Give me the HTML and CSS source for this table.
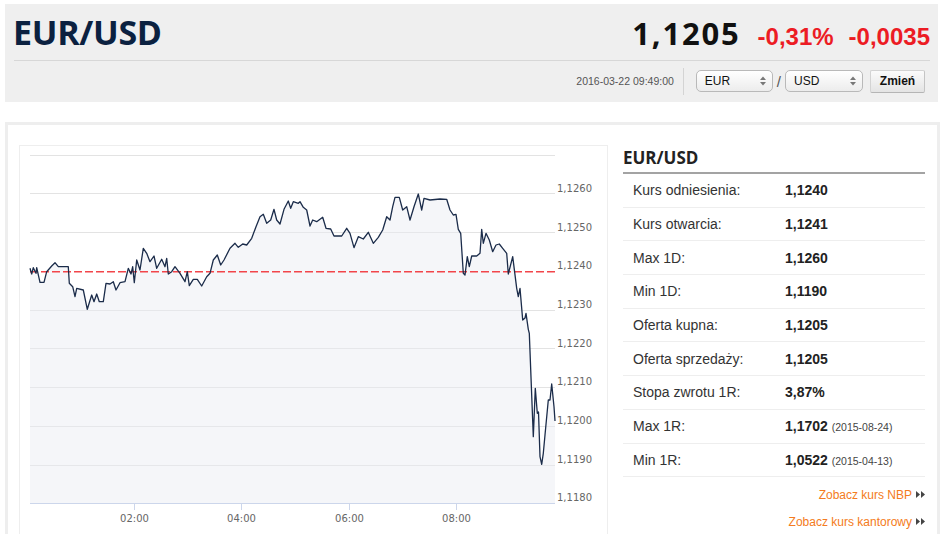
FILE: index.html
```html
<!DOCTYPE html>
<html lang="pl">
<head>
<meta charset="utf-8">
<title>EUR/USD</title>
<link rel="stylesheet" href="styles.css">
</head>
<body>
<header class="header">
  <div class="top-row">
    <h1 class="title">EUR/USD</h1>
    <div class="quote">
      <span class="price">1,1205</span>
      <span class="change">-0,31%</span>
      <span class="change">-0,0035</span>
    </div>
  </div>
  <div class="sub-row">
    <span class="date">2016-03-22 09:49:00</span>
    <span class="vsep"></span>
    <div class="select sel-eur">EUR<svg class="sel-arrows" width="6" height="10" viewBox="0 0 6 10"><polygon points="0,4 3,0.5 6,4" /><polygon points="0,6 3,9.5 6,6" /></svg></div>
    <span class="slash">/</span>
    <div class="select sel-usd">USD<svg class="sel-arrows" width="6" height="10" viewBox="0 0 6 10"><polygon points="0,4 3,0.5 6,4" /><polygon points="0,6 3,9.5 6,6" /></svg></div>
    <button class="btn">Zmień</button>
  </div>
</header>

<main class="main">
  <div class="chart-box">
    <svg class="chart" width="588" height="390" viewBox="20 146 588 390">
      <g class="grid">
        <line x1="30" x2="555" y1="155.5" y2="155.5" />
        <line x1="30" x2="555" y1="193.5" y2="193.5" />
        <line x1="30" x2="555" y1="232.5" y2="232.5" />
        <line x1="30" x2="555" y1="310.5" y2="310.5" />
        <line x1="30" x2="555" y1="348.5" y2="348.5" />
        <line x1="30" x2="555" y1="387.5" y2="387.5" />
        <line x1="30" x2="555" y1="426.5" y2="426.5" />
        <line x1="30" x2="555" y1="465.5" y2="465.5" />
      </g>
      <path class="area" d="M30,268.3 L31.7,274 33.3,267.7 36,273.3 36.7,267.7 40,282.3 44,282.3 46.7,271.7 51.7,266 55,262.7 58.3,266.7 68.3,266.7 69.3,283.3 72.7,286.7 75,296.7 76.7,288.3 83.3,290 87.3,309.3 91.7,295 94,301.7 96.7,294 99.3,301.7 103.3,301.7 106,283.3 110,284 113.3,281.7 116,290 120,282.7 125,281.7 128.3,268.3 131,274 132.7,266.7 134.3,282.7 136.7,260 140,270 143.3,248.3 146.7,253.3 150,261.7 154,256 156.7,268.3 161.7,259.3 165,266.7 166.7,258.3 168.3,274 171.7,271.7 175,266.7 180,273.3 185,281.7 187.3,271.7 189.3,285.7 193.3,279.3 197.3,279.3 201.7,286 206.7,276.7 210,273.3 213.3,260 217.3,255 220.7,265 224,260 230,248.3 235,243.3 238.3,247.3 242.7,244 246.7,245 251.7,238.3 256,226.7 260,216.7 263.3,214.3 266.7,223.3 270.7,220 274,209.3 276.7,220 280,224 284,209.3 288.3,201 290.7,208.3 293.3,201.7 298.3,203.3 300,201.7 303.3,207.3 306.7,210 310,226 312.7,220 316.7,221.7 320,219.3 322.7,217.3 326,228.3 330.7,229 334,236 336.7,236 341.7,236 346.7,228.3 350,233.3 354,247.7 358.3,236.7 363.3,239 368.3,232.3 373.3,243.3 378.3,237.3 382.7,230 386.7,216.7 390,220 392.7,206.7 395,197.3 399.3,197.3 402.7,210 406.7,206.7 410,220 414,206.7 418.3,194 421.7,210 424,198.3 430,200 440,199 446.7,199.3 450,210 453.3,215 456,214.3 458.3,229.3 460.7,233.3 463.3,273.3 465,275 467.3,256.7 469.3,266.7 471.7,256 476.7,256 480,253.3 481.7,229.3 483.3,243.3 486,233.3 489.3,240 492.7,251.7 496,245 499.3,244 502.7,248.3 506.7,253.3 508.3,274 512.7,256.7 516.7,288.3 518.3,296.7 520,288.3 522.7,320 525,318 526,313.3 528.3,329.3 529.3,333.3 533.3,436.7 535.3,388.3 537.3,413.3 538.5,412 540,456.7 541.7,464.3 543.3,453.3 545,435 548.3,400 550,400 551.7,384 554,406.7 555,421 L555,503.5 L30,503.5 Z" />
      <line class="ref-line" x1="30" x2="555" y1="271.75" y2="271.75" />
      <path class="series" d="M30,268.3 L31.7,274 33.3,267.7 36,273.3 36.7,267.7 40,282.3 44,282.3 46.7,271.7 51.7,266 55,262.7 58.3,266.7 68.3,266.7 69.3,283.3 72.7,286.7 75,296.7 76.7,288.3 83.3,290 87.3,309.3 91.7,295 94,301.7 96.7,294 99.3,301.7 103.3,301.7 106,283.3 110,284 113.3,281.7 116,290 120,282.7 125,281.7 128.3,268.3 131,274 132.7,266.7 134.3,282.7 136.7,260 140,270 143.3,248.3 146.7,253.3 150,261.7 154,256 156.7,268.3 161.7,259.3 165,266.7 166.7,258.3 168.3,274 171.7,271.7 175,266.7 180,273.3 185,281.7 187.3,271.7 189.3,285.7 193.3,279.3 197.3,279.3 201.7,286 206.7,276.7 210,273.3 213.3,260 217.3,255 220.7,265 224,260 230,248.3 235,243.3 238.3,247.3 242.7,244 246.7,245 251.7,238.3 256,226.7 260,216.7 263.3,214.3 266.7,223.3 270.7,220 274,209.3 276.7,220 280,224 284,209.3 288.3,201 290.7,208.3 293.3,201.7 298.3,203.3 300,201.7 303.3,207.3 306.7,210 310,226 312.7,220 316.7,221.7 320,219.3 322.7,217.3 326,228.3 330.7,229 334,236 336.7,236 341.7,236 346.7,228.3 350,233.3 354,247.7 358.3,236.7 363.3,239 368.3,232.3 373.3,243.3 378.3,237.3 382.7,230 386.7,216.7 390,220 392.7,206.7 395,197.3 399.3,197.3 402.7,210 406.7,206.7 410,220 414,206.7 418.3,194 421.7,210 424,198.3 430,200 440,199 446.7,199.3 450,210 453.3,215 456,214.3 458.3,229.3 460.7,233.3 463.3,273.3 465,275 467.3,256.7 469.3,266.7 471.7,256 476.7,256 480,253.3 481.7,229.3 483.3,243.3 486,233.3 489.3,240 492.7,251.7 496,245 499.3,244 502.7,248.3 506.7,253.3 508.3,274 512.7,256.7 516.7,288.3 518.3,296.7 520,288.3 522.7,320 525,318 526,313.3 528.3,329.3 529.3,333.3 533.3,436.7 535.3,388.3 537.3,413.3 538.5,412 540,456.7 541.7,464.3 543.3,453.3 545,435 548.3,400 550,400 551.7,384 554,406.7 555,421" />
      <line class="axis" x1="30" x2="555" y1="503.5" y2="503.5" />
      <g class="ticks">
        <line x1="134.5" x2="134.5" y1="504" y2="510" />
        <line x1="241.5" x2="241.5" y1="504" y2="510" />
        <line x1="349.5" x2="349.5" y1="504" y2="510" />
        <line x1="456.5" x2="456.5" y1="504" y2="510" />
      </g>
      <g class="ylabels">
        <text x="557" y="191.5">1,1260</text>
        <text x="557" y="230.5">1,1250</text>
        <text x="557" y="269">1,1240</text>
        <text x="557" y="308">1,1230</text>
        <text x="557" y="346.5">1,1220</text>
        <text x="557" y="385">1,1210</text>
        <text x="557" y="424">1,1200</text>
        <text x="557" y="463">1,1190</text>
        <text x="557" y="501">1,1180</text>
      </g>
      <g class="xlabels">
        <text x="134.5" y="522">02:00</text>
        <text x="241.5" y="522">04:00</text>
        <text x="349.5" y="522">06:00</text>
        <text x="456.5" y="522">08:00</text>
      </g>
    </svg>
  </div>

  <aside class="side">
    <h2 class="side-title">EUR/USD</h2>
    <div class="rows">
      <div class="row"><span class="lbl">Kurs odniesienia:</span><span class="val">1,1240</span></div>
      <div class="row"><span class="lbl">Kurs otwarcia:</span><span class="val">1,1241</span></div>
      <div class="row"><span class="lbl">Max 1D:</span><span class="val">1,1260</span></div>
      <div class="row"><span class="lbl">Min 1D:</span><span class="val">1,1190</span></div>
      <div class="row"><span class="lbl">Oferta kupna:</span><span class="val">1,1205</span></div>
      <div class="row"><span class="lbl">Oferta sprzedaży:</span><span class="val">1,1205</span></div>
      <div class="row"><span class="lbl">Stopa zwrotu 1R:</span><span class="val">3,87%</span></div>
      <div class="row"><span class="lbl">Max 1R:</span><span class="val">1,1702 <small class="dt">(2015-08-24)</small></span></div>
      <div class="row"><span class="lbl">Min 1R:</span><span class="val">1,0522 <small class="dt">(2015-04-13)</small></span></div>
    </div>
    <div class="links">
      <a class="more" href="#">Zobacz kurs NBP<svg class="dbl" width="9" height="7" viewBox="0 0 9 7"><polygon points="0,0 4,3.5 0,7" /><polygon points="5,0 9,3.5 5,7" /></svg></a>
      <a class="more" href="#">Zobacz kurs kantorowy<svg class="dbl" width="9" height="7" viewBox="0 0 9 7"><polygon points="0,0 4,3.5 0,7" /><polygon points="5,0 9,3.5 5,7" /></svg></a>
    </div>
  </aside>
</main>
</body>
</html>
```

FILE: styles.css
```css
* { box-sizing: border-box; }

html, body {
  margin: 0;
  padding: 0;
  background: #ffffff;
  font-family: "Liberation Sans", Arial, sans-serif;
  color: #333333;
  overflow: hidden;
}

.header {
  margin: 4px 7px 0 5px;
  height: 98px;
  background: #efefef;
  padding: 0 8px 0 9px;
}

.top-row {
  display: flex;
  justify-content: space-between;
  align-items: baseline;
  height: 57px;
  padding-top: 11px;
  border-bottom: 1px solid #d7d7d7;
}

.title {
  margin: 0 0 0 -1px;
  font-family: "Open Sans", sans-serif;
  font-weight: 700;
  font-size: 34px;
  line-height: 34px;
  color: #0b2140;
  letter-spacing: -0.3px;
}

.quote {
  display: flex;
  align-items: baseline;
  gap: 15px;
}

.price {
  font-family: "Open Sans", sans-serif;
  font-weight: 700;
  font-size: 31px;
  line-height: 34px;
  letter-spacing: 1.8px;
  color: #111111;
  margin-right: 2px;
}

.change {
  font-family: "Liberation Sans", Arial, sans-serif;
  font-weight: 700;
  font-size: 24px;
  color: #ec1c24;
}

.sub-row {
  display: flex;
  justify-content: flex-end;
  align-items: center;
  height: 40px;
  padding-right: 5px;
}

.date {
  font-size: 10.5px;
  color: #555555;
}

.vsep {
  width: 1px;
  height: 27px;
  background: #d4d4d4;
  margin: 0 12px 0 9px;
}

.select {
  position: relative;
  display: flex;
  align-items: center;
  height: 22px;
  padding-left: 8px;
  border: 1px solid #b9b9b9;
  border-radius: 5px;
  background: linear-gradient(#ffffff, #ececec);
  font-size: 12px;
  color: #111111;
}

.sel-eur { width: 77px; }
.sel-usd { width: 78px; }

.sel-arrows {
  position: absolute;
  right: 6px;
  top: 5px;
  fill: #777777;
}

.slash {
  font-size: 15px;
  color: #555555;
  margin: 0 4px;
}

.btn {
  margin-left: 7px;
  width: 55px;
  height: 23px;
  padding: 0;
  font-family: "Liberation Sans", Arial, sans-serif;
  font-weight: 700;
  font-size: 12px;
  color: #111111;
  background: linear-gradient(#fbfbfb, #e4e4e4);
  border: 1px solid #d3d3d3;
  border-bottom-color: #b5b5b5;
  border-right-color: #c4c4c4;
  border-radius: 2px;
}

.main {
  display: flex;
  align-items: flex-start;
  margin: 20px 5px 0 5px;
  height: 420px;
  border: 3px solid #eeeeee;
  border-bottom: none;
  padding: 20px 0 0 11px;
}

.chart-box {
  width: 589px;
  height: 400px;
  border: 1px solid #eeeeee;
  flex: none;
}

.chart { display: block; }

.grid line { stroke: #e3e3e3; stroke-width: 1; }
.area { fill: #e9ebf1; fill-opacity: 0.45; stroke: none; }
.chart .ref-line { stroke: #f2454a; stroke-width: 1.5; stroke-dasharray: 8 3; }
.series { fill: none; stroke: #1b2c4a; stroke-width: 1.3; stroke-linejoin: round; }
.axis { stroke: #ccd6eb; stroke-width: 1; }
.ticks line { stroke: #ccd6eb; stroke-width: 1; }

.ylabels text {
  font-family: "DejaVu Sans", sans-serif;
  font-size: 10px;
  fill: #666666;
}

.xlabels text {
  font-family: "DejaVu Sans", sans-serif;
  font-size: 10px;
  fill: #666666;
  text-anchor: middle;
}

.side {
  width: 302px;
  margin-left: 15px;
  flex: none;
}

.side-title {
  margin: 0;
  font-family: "Open Sans", sans-serif;
  font-weight: 700;
  font-size: 17px;
  line-height: 25px;
  height: 29px;
  padding-bottom: 2px;
  color: #222222;
  border-bottom: 2px solid #a3a3a3;
}

.row {
  display: flex;
  align-items: center;
  height: 33.7px;
  border-bottom: 1px solid #eeeeee;
  padding-left: 10px;
  font-size: 14px;
}

.lbl {
  width: 152px;
  color: #333333;
}

.val {
  font-weight: 700;
  color: #222222;
}

.dt {
  font-weight: 400;
  font-size: 10.5px;
  color: #444444;
}

.links {
  padding-top: 4px;
  display: flex;
  flex-direction: column;
  align-items: flex-end;
}

.more {
  display: flex;
  align-items: center;
  height: 27px;
  font-size: 12px;
  color: #f47b20;
  text-decoration: none;
}

.dbl {
  margin-left: 4px;
  fill: #444444;
}
```
